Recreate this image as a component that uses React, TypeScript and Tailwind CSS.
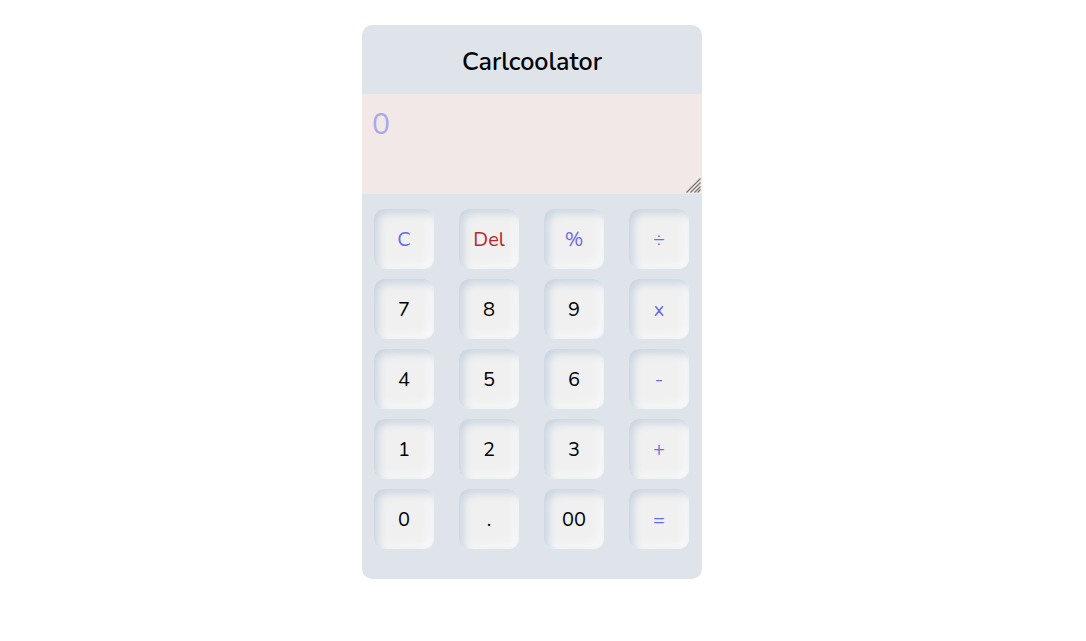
import { useState } from "react";

type Tone = "digit" | "operator" | "danger";

interface Key {
  label: string;
  tone: Tone;
}

const keys: Key[] = [
  { label: "C", tone: "operator" },
  { label: "Del", tone: "danger" },
  { label: "%", tone: "operator" },
  { label: "÷", tone: "operator" },
  { label: "7", tone: "digit" },
  { label: "8", tone: "digit" },
  { label: "9", tone: "digit" },
  { label: "x", tone: "operator" },
  { label: "4", tone: "digit" },
  { label: "5", tone: "digit" },
  { label: "6", tone: "digit" },
  { label: "-", tone: "operator" },
  { label: "1", tone: "digit" },
  { label: "2", tone: "digit" },
  { label: "3", tone: "digit" },
  { label: "+", tone: "operator" },
  { label: "0", tone: "digit" },
  { label: ".", tone: "digit" },
  { label: "00", tone: "digit" },
  { label: "=", tone: "operator" },
];

const tones: Record<Tone, string> = {
  digit: "text-black",
  operator: "text-[#6b6ae8]",
  danger: "text-[#b9252c]",
};

function evaluate(expression: string): string {
  const tokens = expression.match(/\d+\.?\d*|\.\d+|[-+x÷%]/g) ?? [];
  const values: number[] = [];
  let operator = "+";
  for (const token of tokens) {
    const value = Number(token);
    if (Number.isNaN(value)) {
      if (token === "%") values.push((values.pop() ?? 0) / 100);
      else operator = token;
    } else if (operator === "x") values.push((values.pop() ?? 0) * value);
    else if (operator === "÷") values.push((values.pop() ?? 0) / value);
    else values.push(operator === "-" ? -value : value);
  }
  return String(values.reduce((sum, value) => sum + value, 0));
}

export default function App() {
  const [entry, setEntry] = useState("");

  function press(label: string) {
    if (label === "C") setEntry("");
    else if (label === "Del") setEntry(entry.slice(0, -1));
    else if (label === "=") setEntry(evaluate(entry));
    else setEntry(entry + label);
  }

  return (
    <main className="flex justify-center bg-white py-[25px] pr-[22px] font-['Nunito','Noto_Sans',sans-serif]">
      <section className="w-full max-w-[340px] rounded-[10px] bg-[#dfe4eb] pb-[30px]">
        <h1 className="pt-[21px] pb-4 text-center text-[25px] leading-8 font-semibold text-black">Carlcoolator</h1>
        <div className="relative">
          <textarea
            aria-label="Calculation"
            placeholder="0"
            value={entry}
            onChange={(event) => setEntry(event.target.value)}
            className="block h-[100px] w-full resize-none bg-[#f2e8e7] p-[10px] text-[30px] leading-[42px] text-[#6b6ae8] outline-none placeholder:text-[#aba8e8]"
          />
          <svg
            aria-hidden="true"
            className="pointer-events-none absolute right-px bottom-px size-[15px]"
            viewBox="0 0 15 15"
            fill="none"
            stroke="#77716f"
            strokeWidth="1.2"
          >
            <path d="M0.5 14.5 14.5 0.5M4.5 14.5 14.5 4.5M8.5 14.5 14.5 8.5M11.5 14.5 14.5 11.5" />
          </svg>
        </div>
        <div className="grid grid-cols-[repeat(4,60px)] justify-between gap-y-[10px] pt-[15px] pr-[13px] pl-3">
          {keys.map((key) => (
            <button
              key={key.label}
              type="button"
              onClick={() => press(key.label)}
              className={`size-[60px] rounded-[10px] bg-[#f0f0f0] pt-0.5 text-xl shadow-[inset_4px_4px_8px_#c8d4e0,inset_-4px_-4px_8px_#f9fafb] ${tones[key.tone]}`}
            >
              {key.label}
            </button>
          ))}
        </div>
      </section>
    </main>
  );
}
